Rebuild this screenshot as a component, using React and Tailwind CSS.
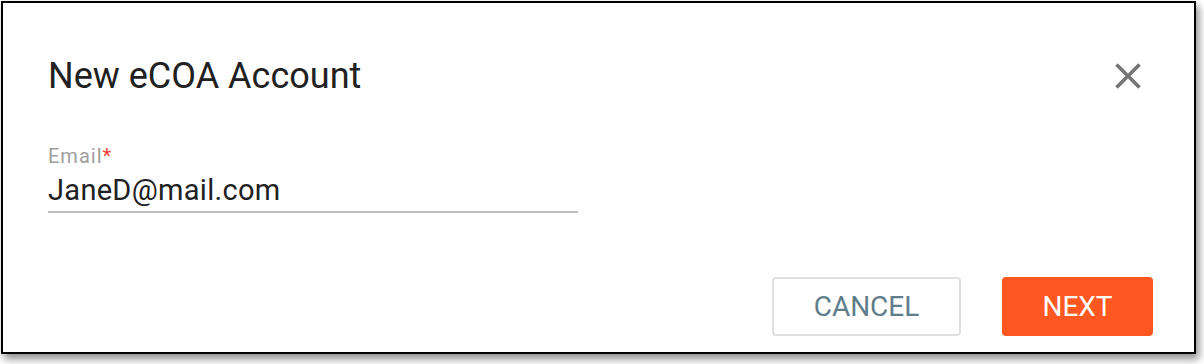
import React from 'react';

export default function App() {
  return (
    <div className="w-[1204px] h-[364px] bg-white pt-[1px] pl-[1px]" style={{ fontFamily: 'Roboto, "Liberation Sans", sans-serif' }}>
      <div className="w-[1195px] h-[353px] border-2 border-black bg-white shadow-[3px_5px_8px_rgba(0,0,0,0.45)] flex flex-col">
        {/* header */}
        <div className="flex items-center justify-between pl-[45px] pr-[44px] pt-[51px]">
          <h1 className="text-[36px] leading-[42px] text-[#212121]">New eCOA Account</h1>
          <button className="text-[#757575]">
            <svg width="44" height="44" viewBox="0 0 24 24" fill="currentColor">
              <path d="M19 6.41L17.59 5 12 10.59 6.41 5 5 6.41 10.59 12 5 17.59 6.41 19 12 13.41 17.59 19 19 17.59 13.41 12z" />
            </svg>
          </button>
        </div>

        {/* email field */}
        <div className="pl-[45px] pt-[46px]">
          <div className="w-[530px]">
            <label className="block text-[20px] leading-[24px] tracking-[1px] text-[#9e9e9e]">
              Email<span className="text-[#f44336]">*</span>
            </label>
            <div className="mt-[4px] text-[29px] leading-[36px] text-[#212121] tracking-[0.3px] pb-[3px] border-b-2 border-[#bdbdbd]">
              JaneD@mail.com
            </div>
          </div>
        </div>

        {/* actions */}
        <div className="flex justify-end gap-[41px] pr-[41px] mt-auto pb-[16px]">
          <button className="w-[189px] h-[59px] border-2 border-[#e0e0e0] rounded-[4px] text-[28px] text-[#607d8b]">
            CANCEL
          </button>
          <button className="w-[151px] h-[59px] bg-[#ff5722] rounded-[4px] text-[28px] text-white">
            NEXT
          </button>
        </div>
      </div>
    </div>
  );
}
